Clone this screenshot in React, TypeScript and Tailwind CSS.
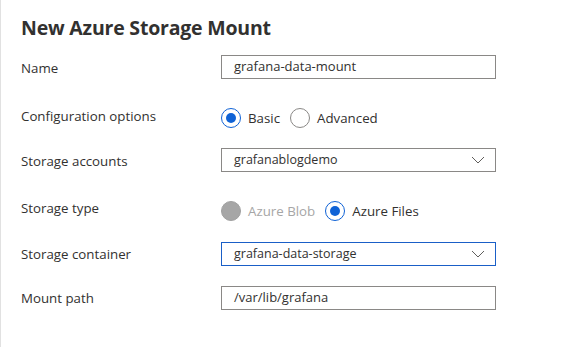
import React from "react";

function Radio({ checked, disabled, label }: { checked?: boolean; disabled?: boolean; label: string }) {
  return (
    <div className="flex items-center h-5">
      {disabled ? (
        <span className="w-5 h-5 rounded-full bg-[#a6a6a6] border border-[#a0a0a0]" />
      ) : checked ? (
        <span className="w-5 h-5 rounded-full border border-[#0f62d6] flex items-center justify-center">
          <span className="w-[10px] h-[10px] rounded-full bg-[#0f62d6]" />
        </span>
      ) : (
        <span className="w-5 h-5 rounded-full border border-[#8a8886]" />
      )}
      <span className={`ml-[7px] text-[13.3px] leading-[20px] ${disabled ? "text-[#a6a6a6]" : "text-[#323130]"}`}>{label}</span>
    </div>
  );
}

function Chevron() {
  return (
    <svg width="14" height="8" viewBox="0 0 14 8" className="mr-[10px]">
      <path d="M1 1 L7 7 L13 1" fill="none" stroke="#605e5c" strokeWidth="1" />
    </svg>
  );
}

export default function App() {
  const font = { fontFamily: '"Open Sans", "Segoe UI", sans-serif' };
  return (
    <div className="w-[563px] h-[347px] bg-white border-l border-[#e1e1e1] text-[#323130]" style={font}>
      <div className="pl-[20px] pt-[15px]">
        <h1 className="text-[19.5px] font-bold text-[#323130] leading-[26px] tracking-[-0.2px]">New Azure Storage Mount</h1>
        <div className="mt-[14px] grid grid-cols-[200px_275px]">
          <div className="h-[24px] pt-[3px] text-[13.3px] leading-[20px]">Name</div>
          <div className="h-[24px] border border-[#8a8886] flex items-center pl-[12px] text-[13px]">grafana-data-mount</div>

          <div className="h-[69px] pt-[27px] text-[13.3px] leading-[20px]">Configuration options</div>
          <div className="h-[69px] pt-[29px] flex items-start gap-[10px]">
            <Radio checked label="Basic" />
            <Radio label="Advanced" />
          </div>

          <div className="h-[24px] pt-[3px] text-[13.3px] leading-[20px]">Storage accounts</div>
          <div className="h-[24px] border border-[#8a8886] flex items-center justify-between pl-[12px] text-[12.5px]">
            <span>grafanablogdemo</span>
            <Chevron />
          </div>

          <div className="h-[70px] pt-[26px] text-[13.3px] leading-[20px]">Storage type</div>
          <div className="h-[70px] pt-[29px] flex items-start gap-[10px]">
            <Radio disabled label="Azure Blob" />
            <Radio checked label="Azure Files" />
          </div>

          <div className="h-[24px] pt-[2px] text-[13.3px] leading-[20px]">Storage container</div>
          <div className="h-[24px] border border-[#1a5fc7] flex items-center justify-between pl-[12px] text-[12.5px]">
            <span>grafana-data-storage</span>
            <Chevron />
          </div>

          <div className="h-[20px]" />
          <div className="h-[20px]" />

          <div className="h-[24px] pt-[2px] text-[13.3px] leading-[20px]">Mount path</div>
          <div className="h-[24px] border border-[#8a8886] flex items-center pl-[12px] text-[13px]">/var/lib/grafana</div>
        </div>
      </div>
    </div>
  );
}
